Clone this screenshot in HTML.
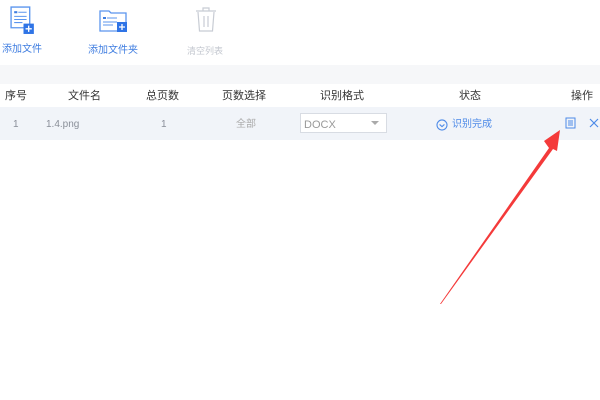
<!DOCTYPE html>
<html><head><meta charset="utf-8"><style>
body{margin:0;width:600px;height:400px;background:#fff;font-family:"Liberation Sans","Noto Sans CJK SC",sans-serif;position:relative;overflow:hidden}
.a{position:absolute;white-space:nowrap;line-height:14px}
.tb{font-size:10px;color:#3f7de0}
.band{position:absolute;left:0;top:65px;width:600px;height:19px;background:#f6f7f9}
.row{position:absolute;left:0;top:107px;width:600px;height:33px;background:#f1f4f9}
.h{font-size:11px;color:#333;top:89px}
.d{font-size:10px;color:#8a8f99;top:118px}
</style></head><body>
<svg class="a" style="left:10px;top:6px" width="27" height="29" viewBox="0 0 26 28">
<path d="M1 1h18v20H1z" fill="#fff" stroke="#5b95ee" stroke-width="1.3"/>
<rect x="4" y="5" width="3" height="2" fill="#3f7de0"/>
<path d="M8 6h8M4 10h12M4 13h12M4 16h8" stroke="#5b95ee" stroke-width="1"/>
<rect x="13" y="17" width="10" height="10" fill="#2f74e6"/>
<path d="M18 19v6M15 22h6" stroke="#fff" stroke-width="1.3"/>
</svg>
<div class="a tb" style="left:2px;top:43px">添加文件</div>
<svg class="a" style="left:99px;top:9px" width="30" height="25" viewBox="0 0 30 25">
<path d="M1 2h9l2 2h15v18H1z" fill="#fff" stroke="#5b95ee" stroke-width="1.3"/>
<rect x="4" y="8" width="3" height="2" fill="#3f7de0"/>
<path d="M8 9h10M4 13h14M4 16h10" stroke="#5b95ee" stroke-width="1"/>
<rect x="18" y="13" width="10" height="10" fill="#2f74e6"/>
<path d="M23 15v6M20 18h6" stroke="#fff" stroke-width="1.3"/>
</svg>
<div class="a tb" style="left:88px;top:44px">添加文件夹</div>
<svg class="a" style="left:195px;top:7px" width="22" height="26" viewBox="0 0 22 26">
<path d="M1 4h20M8 4V1h6v3M3 5l1.5 19h13L19 5M9 9v11M13 9v11" fill="none" stroke="#c8ccd4" stroke-width="1.2"/>
</svg>
<div class="a" style="left:187px;top:44px;font-size:9px;color:#c3c7cf">清空列表</div>
<div class="band"></div>
<div class="a h" style="left:5px">序号</div>
<div class="a h" style="left:68px">文件名</div>
<div class="a h" style="left:146px">总页数</div>
<div class="a h" style="left:222px">页数选择</div>
<div class="a h" style="left:320px">识别格式</div>
<div class="a h" style="left:459px">状态</div>
<div class="a h" style="left:571px">操作</div>
<div class="row"></div>
<div class="a d" style="left:13px">1</div>
<div class="a d" style="left:46px">1.4.png</div>
<div class="a d" style="left:161px">1</div>
<div class="a d" style="left:236px;color:#aaa">全部</div>
<div class="a" style="left:300px;top:113px;width:87px;height:20px;border:1px solid #d8dce3;background:#fff;box-sizing:border-box"></div>
<div class="a d" style="left:304px;font-size:11px;color:#999">DOCX</div>
<div class="a" style="left:371px;top:121px;width:0;height:0;border-left:4px solid transparent;border-right:4px solid transparent;border-top:4px solid #aaa"></div>
<svg class="a" style="left:436px;top:119px" width="12" height="12" viewBox="0 0 11 11"><circle cx="5.5" cy="5.5" r="4.6" fill="none" stroke="#4d8ae8" stroke-width="1"/><path d="M3.3 5l2.2 2 2.2-2" fill="none" stroke="#4d8ae8" stroke-width="1"/></svg>
<div class="a d" style="left:452px;color:#4d8ae8">识别完成</div>
<svg class="a" style="left:565px;top:117px" width="11" height="12" viewBox="0 0 11 12"><rect x="1" y="1" width="9" height="10" fill="none" stroke="#4d8ae8"/><path d="M3 4h5M3 6h5M3 8h5" stroke="#4d8ae8"/></svg>
<svg class="a" style="left:589px;top:118px" width="10" height="10" viewBox="0 0 10 10"><path d="M1 1l8 8M9 1l-8 8" stroke="#4d8ae8" stroke-width="1.2"/></svg>
<svg class="a" style="left:0;top:0" width="600" height="400"><polygon points="440,304 549,148 544,141 560,130 557,151 553,149 441,304" fill="#f43a3a"/></svg>
</body></html>
